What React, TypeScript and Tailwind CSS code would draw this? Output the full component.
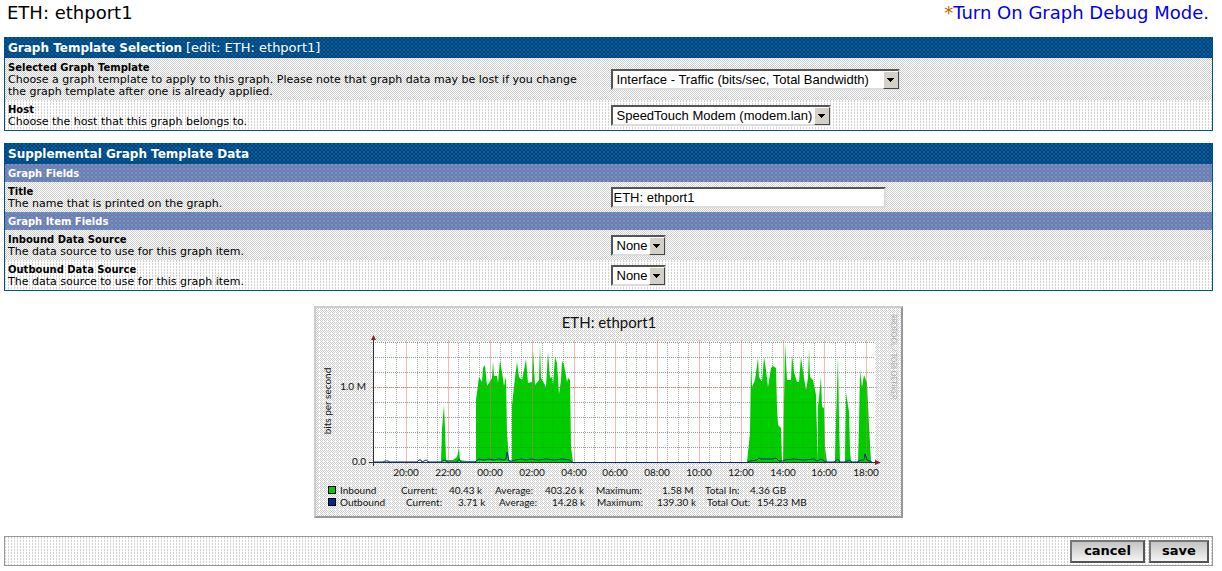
import React from "react";

const rowDark =
  "bg-[#e5e5e5] bg-[conic-gradient(#cdcdcd_25%,#fff_0_50%,#cdcdcd_0_75%,#fff_0)] bg-[length:2px_2px]";
const rowLight =
  "bg-[#f5f5f5] bg-[conic-gradient(#fff_75%,#d2d2d2_0)] bg-[length:3px_3px]";
const navy =
  "bg-[#00438c] bg-[conic-gradient(#006699_25%,#003f80_0_50%,#005a90_0_75%,#003f80_0)] bg-[length:4px_4px]";
const slate =
  "bg-[#6d88bb] bg-[conic-gradient(#6699cc_25%,#7777aa_0_50%,#6d88bb_0_75%,#7777aa_0)] bg-[length:4px_4px]";

function Heading({ title, note }: { title: string; note?: string }) {
  return (
    <h2 className={`flex h-[21px] items-center gap-1 px-[3px] pt-px text-xs font-bold text-white ${navy}`}>
      {title}
      {note && <span className="text-[13px] font-normal">{note}</span>}
    </h2>
  );
}

function SubHeading({ title }: { title: string }) {
  return (
    <h3 className={`h-[18px] px-[3px] pt-px text-[10px] leading-[18px] font-bold text-white ${slate}`}>{title}</h3>
  );
}

function Field({
  id,
  label,
  help,
  dark,
  children,
}: {
  id: string;
  label: string;
  help: string;
  dark?: boolean;
  children: React.ReactNode;
}) {
  return (
    <div className={`flex items-center ${dark ? rowDark : rowLight}`}>
      <div className="w-1/2 pt-1 pb-[2px] pl-[3px] text-[11px] leading-3">
        <label htmlFor={id} className="block text-[10px] leading-3 font-bold">
          {label}
        </label>
        <p className="max-w-[584px]">{help}</p>
      </div>
      <div className="w-1/2 pl-[2px]">{children}</div>
    </div>
  );
}

const sunken = "h-[21px] border-2 border-t-[#555] border-l-[#555] border-r-[#ddd] border-b-[#ddd] bg-white";

function Select({ id, value, width }: { id: string; value: string; width: string }) {
  return (
    <div className={`relative ${width}`}>
      <select
        id={id}
        className={`block w-full appearance-none pt-px pl-1 font-['Liberation_Sans',sans-serif] text-[13px] leading-4 ${sunken}`}
      >
        <option>{value}</option>
      </select>
      <span className="pointer-events-none absolute top-[2px] right-px flex h-[18px] w-4 items-center justify-center border border-t-white border-l-white border-r-[#444] border-b-[#444] bg-[#d4d0c8]">
        <svg width="7" height="4" viewBox="0 0 7 4" shapeRendering="crispEdges">
          <path d="M0 0h7v1h-1v1h-1v1h-1v1h-1v-1h-1v-1h-1v-1h-1z" />
        </svg>
      </span>
    </div>
  );
}

const inbound =
  "M59 155.500H127L128 123L130 99L131 123L132 154H139L143 151L145 142L146 154L152 155H162V94L165 71L168 76L169 62L171 59L173 80L178 72L179 55L180 70H183L184 77L186 54L188 66L190 80L192 71L193 127L195 154L198 156V99L201 72L203 56L205 71L208 74L210 64L212 53L214 77L218 76L219 44L221 79L225 74L226 39L227 72L232 81L234 46L236 72L238 71L239 79L241 51L243 57L245 88L247 74L248 55L250 59L253 76L254 72L256 74L257 141L259 156H433L436 127L437 59L438 81L441 74L444 52L445 71L448 76L450 51L452 64L454 81L457 62L459 60L462 62L463 101L464 119L467 122L468 156H469L471 37L473 74H477L478 49L480 66L483 76H485L487 51L489 66L492 84L494 72L495 43L496 71L499 74L502 89L503 127L504 155V101L507 71L508 101L510 102L511 141L513 156H521L522 114L524 51L525 114L526 156H531L532 87L535 106L536 144L537 156H544L545 119L546 64L548 81L550 69L553 77L555 119L557 156Z";

const outbound =
  "M59 156H69L71 155H74L76 156H103L105 154H107L108 156L112 154L115 156H127L130 154L134 156H143L145 153L147 156H161L165 153L170 154L175 153L180 154L185 153L190 154L192 153L193 146L195 155H198L202 154L207 153L212 154L217 153L224 154L232 153L240 154L248 153L256 154L258 156.500H433L436 155L443 154L445 152L447 153H458L462 152L465 155H469L471 154L480 153L490 154L500 153L503 155L507 153L512 156H520L524 153L526 156H531L535 154L538 156H543L547 154H550L551 148L553 154L558 156";

const hours: [number, string][] = [
  [92, "20:00"],
  [134, "22:00"],
  [176, "00:00"],
  [218, "02:00"],
  [260, "04:00"],
  [301, "06:00"],
  [343, "08:00"],
  [385, "10:00"],
  [427, "12:00"],
  [469, "14:00"],
  [510, "16:00"],
  [552, "18:00"],
];

const legend: { y: number; fill: string; cells: [number, string][] }[] = [
  {
    y: 188,
    fill: "#00cc00",
    cells: [
      [26, "Inbound"],
      [87, "Current:"],
      [135, "40.43 k"],
      [181, "Average:"],
      [231, "403.26 k"],
      [282, "Maximum:"],
      [348, "1.58 M"],
      [391, "Total In:"],
      [436, "4.36 GB"],
    ],
  },
  {
    y: 200,
    fill: "#002a97",
    cells: [
      [26, "Outbound"],
      [92, "Current:"],
      [144, "3.71 k"],
      [185, "Average:"],
      [238, "14.28 k"],
      [283, "Maximum:"],
      [343, "139.30 k"],
      [393, "Total Out:"],
      [443, "154.23 MB"],
    ],
  },
];

const minorX = Array.from({ length: 47 }, (_, i) => i)
  .filter((i) => i % 4 !== 2)
  .map((i) => Math.round(71.2 + i * 10.45));

function TrafficGraph() {
  return (
    <svg
      width="589"
      height="212"
      viewBox="0 0 589 212"
      role="img"
      aria-label="ETH: ethport1"
      fontFamily="Lato, sans-serif"
      fontSize="10"
      fill="#111"
    >
      <defs>
        <pattern id="panel" width="4" height="4" patternUnits="userSpaceOnUse" shapeRendering="crispEdges">
          <rect width="4" height="4" fill="#fff" />
          <path d="M0 0h1v1H0zM2 0h1v1H2zM1 1h1v1H1zM3 1h1v1H3zM0 2h1v1H0zM2 2h1v1H2zM3 3h1v1H3z" fill="#cdcdcd" />
        </pattern>
      </defs>
      <rect width="589" height="212" fill="url(#panel)" />
      <path d="M0 0H589V2H2V212H0Z" fill="#ccc" />
      <path d="M589 0V212H0L2 210H587V2Z" fill="#999" />
      <rect x="59" y="36" width="502" height="120" fill="#fff" />
      <g stroke="#bbb" strokeDasharray="1 1" shapeRendering="crispEdges">
        {Array.from({ length: 8 }, (_, i) => (
          <path key={i} d={`M57 ${36.5 + i * 15}H561`} />
        ))}
        {minorX.map((x) => (
          <path key={x} d={`M${x + 0.5} 37V156`} />
        ))}
      </g>
      <path d={inbound} fill="#00cc00" />
      <g stroke="#226622" strokeOpacity="0.3" strokeDasharray="1 1" shapeRendering="crispEdges">
        {Array.from({ length: 8 }, (_, i) => (
          <path key={i} d={`M57 ${36.5 + i * 15}H561`} />
        ))}
        {minorX.map((x) => (
          <path key={x} d={`M${x + 0.5} 37V156`} strokeOpacity="0.15" />
        ))}
      </g>
      <g stroke="#ee6666" strokeOpacity="0.45" shapeRendering="crispEdges">
        {hours.map(([x]) => (
          <path key={x} d={`M${x + 0.5} 34V158`} />
        ))}
        <path d="M57 81.500H563" strokeDasharray="2 1" />
      </g>
      <path d="M59.500 31V160M55 156.500H563" stroke="#333" fill="none" shapeRendering="crispEdges" />
      <path d={outbound} fill="none" stroke="#002a97" />
      <path d="M59.500 29L62 34H57ZM567 156.500L561 154V159Z" fill="#882222" />
      <text x="295" y="22" fontSize="15" textAnchor="middle">
        ETH: ethport1
      </text>
      <text x="52" y="84" textAnchor="end">
        1.0 M
      </text>
      <text x="52" y="159" textAnchor="end">
        0.0
      </text>
      <text transform="translate(17 95) rotate(-90)" textAnchor="middle">
        bits per second
      </text>
      <text transform="translate(577 8) rotate(90)" fontSize="7" fill="#aaa">
        RRDTOOL / TOBI OETIKER
      </text>
      {hours.map(([x, t]) => (
        <text key={t} x={x} y="170" textAnchor="middle">
          {t}
        </text>
      ))}
      {legend.map((row) => (
        <g key={row.y}>
          <rect x="14.500" y={row.y - 7.5} width="7" height="7" fill={row.fill} stroke="#000" shapeRendering="crispEdges" />
          {row.cells.map(([x, t]) => (
            <text key={x} x={x} y={row.y}>
              {t}
            </text>
          ))}
        </g>
      ))}
    </svg>
  );
}

const button =
  "h-[23px] border-2 border-t-[#777] border-l-[#777] border-r-[#555] border-b-[#555] bg-linear-to-b from-[#c4c4c4] to-[#f4f4f4] text-[13px] leading-4 font-bold";

export default function App() {
  return (
    <div className="bg-white px-1 pb-1 font-['DejaVu_Sans',Verdana,sans-serif] text-black">
      <header className="flex h-[37px] items-start justify-between px-[3px] pt-[2px] text-lg leading-[22px]">
        <h1>ETH: ethport1</h1>
        <p className="pr-[6px] text-[#c06000]">
          *
          <a href="#debug" className="text-[#0000f0]">
            Turn On Graph Debug Mode.
          </a>
        </p>
      </header>
      <form onSubmit={(e) => e.preventDefault()} className="mr-[5px]">
        <section className="border border-t-0 border-[#00538c]">
          <Heading title="Graph Template Selection" note="[edit: ETH: ethport1]" />
          <Field
            id="template"
            label="Selected Graph Template"
            help="Choose a graph template to apply to this graph. Please note that graph data may be lost if you change the graph template after one is already applied."
            dark
          >
            <Select id="template" value="Interface - Traffic (bits/sec, Total Bandwidth)" width="w-[289px]" />
          </Field>
          <Field id="host" label="Host" help="Choose the host that this graph belongs to.">
            <Select id="host" value="SpeedTouch Modem (modem.lan)" width="w-[220px]" />
          </Field>
        </section>
        <section className="mt-3 border border-t-0 border-[#00538c]">
          <Heading title="Supplemental Graph Template Data" />
          <SubHeading title="Graph Fields" />
          <Field id="title" label="Title" help="The name that is printed on the graph." dark>
            <input
              id="title"
              defaultValue="ETH: ethport1"
              className={`block w-[275px] pl-px font-['Liberation_Sans',sans-serif] text-[13px] ${sunken}`}
            />
          </Field>
          <SubHeading title="Graph Item Fields" />
          <Field id="inbound" label="Inbound Data Source" help="The data source to use for this graph item." dark>
            <Select id="inbound" value="None" width="w-[55px]" />
          </Field>
          <Field id="outbound" label="Outbound Data Source" help="The data source to use for this graph item.">
            <Select id="outbound" value="None" width="w-[55px]" />
          </Field>
        </section>
        <div className="flex justify-center py-[15px]">
          <TrafficGraph />
        </div>
        <footer className={`mt-[3px] flex h-[30px] items-center justify-end gap-1 border border-[#999] px-[3px] ${rowLight}`}>
          <button type="button" className={`w-[75px] ${button}`}>
            cancel
          </button>
          <button type="submit" className={`w-[60px] ${button}`}>
            save
          </button>
        </footer>
      </form>
    </div>
  );
}
